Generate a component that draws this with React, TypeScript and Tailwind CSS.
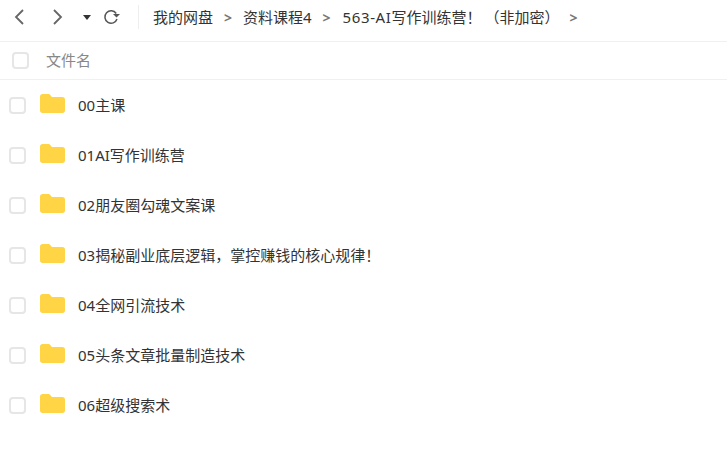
const FONT = '"Noto Sans", "Noto Sans CJK SC", sans-serif';

const folders = [
  '00主课',
  '01AI写作训练营',
  '02朋友圈勾魂文案课',
  '03揭秘副业底层逻辑，掌控赚钱的核心规律！',
  '04全网引流技术',
  '05头条文章批量制造技术',
  '06超级搜索术',
];

function FolderIcon() {
  return (
    <svg width="25" height="19" viewBox="0 0 25 19" className="shrink-0">
      <path
        d="M0 2.5C0 1.1 1.1 0 2.5 0H8C9.1 0 9.9.5 10.5 1.3L11.8 3H22.5C23.9 3 25 4.1 25 5.5V16.5C25 17.9 23.9 19 22.5 19H2.5C1.1 19 0 17.9 0 16.5Z"
        fill="#ffd546"
      />
    </svg>
  );
}

function Checkbox() {
  return <div className="h-[17px] w-[17px] shrink-0 rounded-[4px] border-2 border-[#e6e6e6] bg-white" />;
}

function Sep() {
  return <span className="w-[10px] text-center text-[14px] font-bold text-[#777]">&gt;</span>;
}

export default function App() {
  return (
    <div className="h-[457px] w-[727px] overflow-hidden bg-white text-[15px] text-[#333]" style={{ fontFamily: FONT }}>
      {/* toolbar */}
      <div className="flex h-[42px] items-center border-b border-[#f0f0f0] pb-[7px]">
        <svg width="12" height="16" viewBox="0 0 12 16" fill="none" stroke="#666" strokeWidth="1.8" className="ml-[13px]">
          <path d="M10 1 3 8l7 7" />
        </svg>
        <svg width="12" height="16" viewBox="0 0 12 16" fill="none" stroke="#666" strokeWidth="1.8" className="ml-[27px]">
          <path d="M2 1l7 7-7 7" />
        </svg>
        <svg width="8" height="5" viewBox="0 0 8 5" className="ml-[19px]">
          <path d="M0 0h8L4 5Z" fill="#333" />
        </svg>
        <svg width="17" height="16" viewBox="0 0 17 16" fill="none" stroke="#555" strokeWidth="1.5" className="ml-[12px]">
          <path d="M13.2 4.5A6.2 6.2 0 1 0 14 10" />
          <path d="M10 5h7l-3.5 3.5Z" fill="#555" stroke="none" />
        </svg>
        <div className="ml-[18px] mr-[14px] h-[24px] w-px bg-[#eee]" />
        <div className="flex items-center gap-[10px] whitespace-nowrap">
          <span>我的网盘</span>
          <Sep />
          <span>资料课程4</span>
          <Sep />
          <span className="ml-[1px] -mr-[1px]">
            <span className="tracking-[0.6px]">563-AI</span>写作训练营！<span className="ml-[3px]">（非加密）</span>
          </span>
          <Sep />
        </div>
      </div>

      {/* header */}
      <div className="flex h-[38px] items-center border-b border-[#f0f0f0] pl-[12px] text-[#888]">
        <Checkbox />
        <span className="ml-[17px]">文件名</span>
      </div>

      {/* rows */}
      <div>
        {folders.map((name) => (
          <div key={name} className="flex h-[50px] items-center pl-[9px]">
            <Checkbox />
            <div className="ml-[14px] -mt-[3px]">
              <FolderIcon />
            </div>
            <span className="ml-[13px]">{name}</span>
          </div>
        ))}
      </div>
    </div>
  );
}
